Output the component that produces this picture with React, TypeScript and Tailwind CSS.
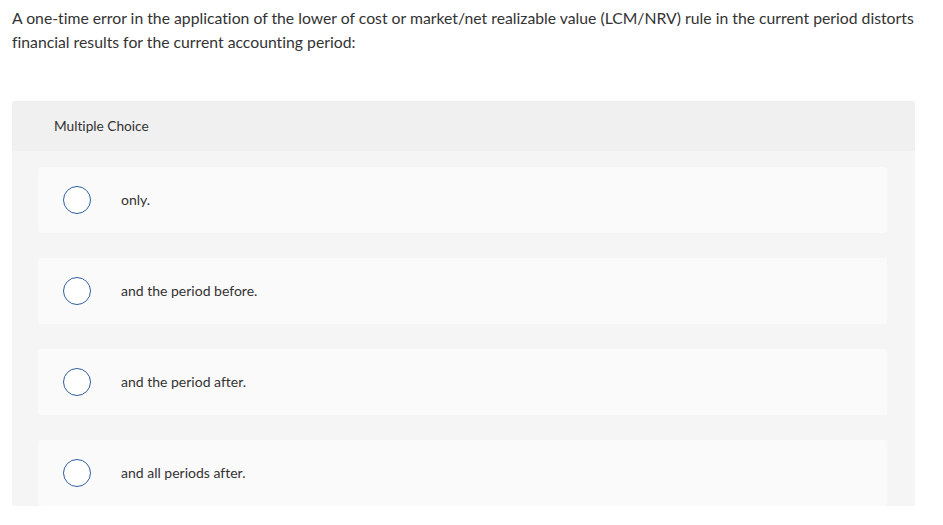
import React from "react";

const options = ["only.", "and the period before.", "and the period after.", "and all periods after."];

export default function App() {
  return (
    <div className="bg-white w-[943px] h-[525px] overflow-hidden text-[#333333] [font-variant-ligatures:none]" style={{ fontFamily: "Lato, 'Open Sans', sans-serif" }}>
      <div className="pl-3 pr-2 pt-[6px] text-[15.75px] leading-[24px]">
        A one-time error in the application of the lower of cost or market/net realizable value (LCM/NRV) rule in the current period distorts financial results for the current accounting period:
      </div>
      <div className="mt-[47px] ml-3 w-[903px] h-[405px] overflow-hidden rounded-t-[3px] bg-[#f5f5f5]">
        <div className="h-[50px] bg-[#f0f0f0] pl-[42px] flex items-center text-[13.7px]">Multiple Choice</div>
        <div className="flex flex-col gap-[25px] pt-4 pl-[26px] pr-[28px]">
          {options.map((o) => (
            <div key={o} className="h-[66px] shrink-0 rounded-[3px] bg-[#fafafa] flex items-center">
              <div className="ml-[25px] w-[28px] h-[28px] rounded-full border-[1.5px] border-[#2f5f9e] bg-white" />
              <div className="ml-[30px] pb-[2px] text-[14px]">{o}</div>
            </div>
          ))}
        </div>
      </div>
    </div>
  );
}
